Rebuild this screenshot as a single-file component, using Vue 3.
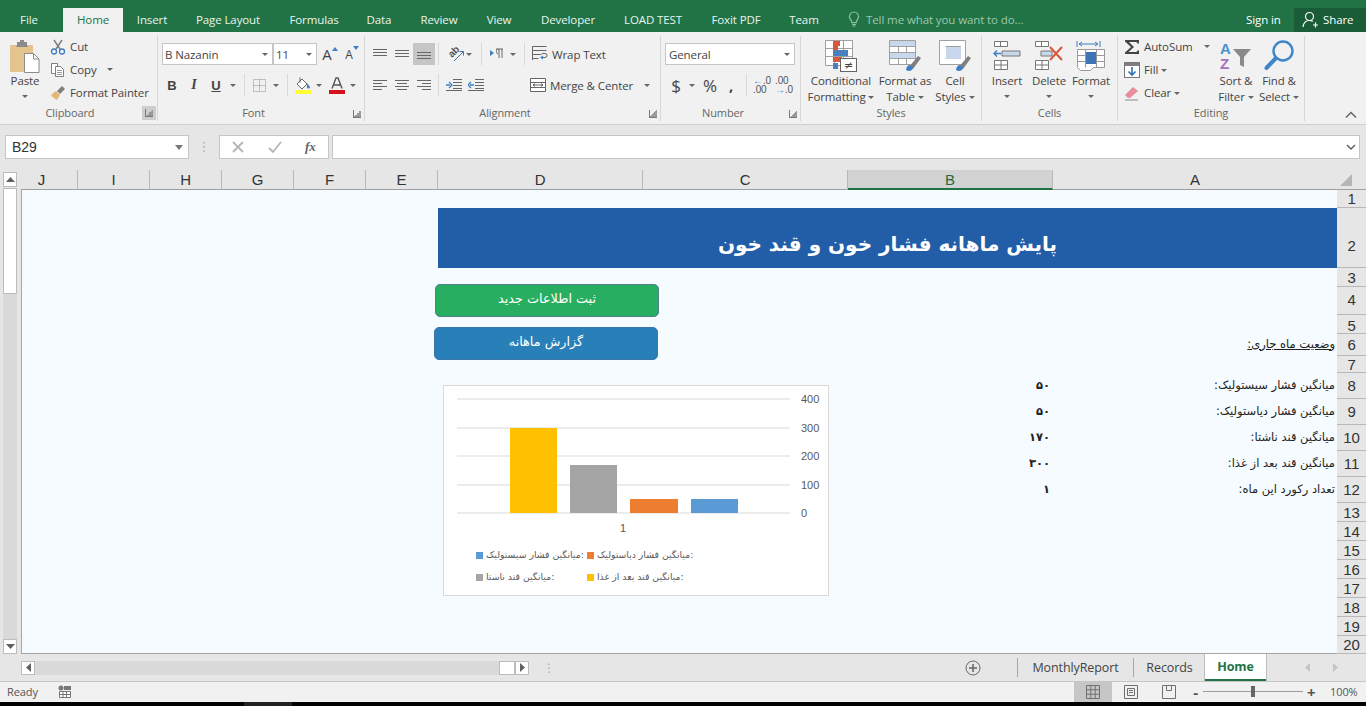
<template>
  <div class="excel">

    <!-- Title / tab strip -->
    <header class="tabstrip">
      <div class="tabs">
        <span v-for="t in tabs" :key="t" class="tab" :class="{ 'tab--active': t === 'Home', 'tab--file': t === 'File' }">{{ t }}</span>
      </div>
      <div class="tell">
        <svg width="12" height="16" viewBox="0 0 12 16" fill="none" stroke="#8fbf9f" stroke-width="1.2"><path d="M6 1a4.6 4.6 0 0 0-4.6 4.6c0 2.2 2 3.2 2.4 6h4.4c.4-2.8 2.4-3.800 2.400-6A4.600 4.600 0 0 0 6 1zM4 13.500h4M4.500 15h3"/></svg>
        <span>Tell me what you want to do...</span>
      </div>
      <span class="signin">Sign in</span>
      <div class="share">
        <svg width="17" height="17" viewBox="0 0 17 17" fill="none" stroke="#fff" stroke-width="1.200"><circle cx="7.500" cy="5.500" r="4"/><path d="M1 16c.5-4 3-6.500 6.500-6.500 1.200 0 2.300.3 3.200.9M11 14h5M13.500 11.500v5"/></svg>
        <span>Share</span>
      </div>
    </header>

    <!-- Ribbon -->
    <section class="ribbon">

      <div class="group">
        <div class="group-body clip-body">
          <div class="big big--paste">
            <svg class="big-icon" width="32" height="34" viewBox="0 0 32 34">
              <rect x="1" y="6" width="23" height="27" fill="#e4c38d"/>
              <path d="M8 6V3h3V1h4v2h3v3l1 2H7z" fill="#8b8b8b"/>
              <path d="M15.500 14.500h9l5.500 5.500v13.500H15.500z" fill="#fff" stroke="#8a8a8a"/>
              <path d="M24.500 14.500V20H30" fill="none" stroke="#8a8a8a"/>
            </svg>
            <span>Paste</span>
            <i class="caret caret--line"></i>
          </div>
          <div class="small-list">
            <div class="small">
              <svg width="16" height="16" viewBox="0 0 16 16" fill="none"><path d="M4 1l6 9M12 1L6 10" stroke="#7b7b7b" stroke-width="1.400"/><circle cx="4" cy="12.500" r="2.500" stroke="#3f7fc1" stroke-width="1.300"/><circle cx="12" cy="12.500" r="2.500" stroke="#3f7fc1" stroke-width="1.300"/></svg>
              <span>Cut</span>
            </div>
            <div class="small">
              <svg width="16" height="16" viewBox="0 0 16 16" fill="#fff" stroke="#808080"><path d="M1.500 1.500h6v10h-6z"/><path d="M5.500 4.500h5l3 3v7h-8z"/><path d="M7 8.500h5M7 10.500h5M7 12.500h5" stroke-width=".8"/></svg>
              <span>Copy</span>
              <i class="caret copy-caret"></i>
            </div>
            <div class="small">
              <svg width="16" height="16" viewBox="0 0 16 16"><path d="M1 10l5-4 4 4-3 5-2-1-1-2-1 1z" fill="#e3b874"/><path d="M7 6l5-5 3 3-5 5z" fill="#7f7f7f"/></svg>
              <span>Format Painter</span>
            </div>
          </div>
        </div>
        <div class="group-label clip-label">Clipboard</div>
        <i class="launcher launcher--hot"></i>
      </div>

      <div class="group">
        <div class="group-body rows font-body">
          <div class="row">
            <div class="combo combo--font"><span>B Nazanin</span><i class="caret"></i></div>
            <div class="combo combo--size"><span>11</span><i class="caret"></i></div>
            <div class="tool grow-a"><span class="a-big">A</span><svg width="6" height="5" viewBox="0 0 6 5"><path d="M0 5l3-4 3 4z" fill="#3f7fc1"/></svg></div>
            <div class="tool"><span class="a-small">A</span><svg width="6" height="5" viewBox="0 0 6 5"><path d="M0 0l3 4 3-4z" fill="#3f7fc1"/></svg></div>
          </div>
          <div class="row">
            <div class="tool tool--b">B</div>
            <div class="tool tool--i">I</div>
            <div class="tool tool--u">U</div>
            <i class="caret caret--slot"></i>
            <i class="sep sep--border"></i>
            <div class="tool">
              <svg width="15" height="15" viewBox="0 0 15 15" fill="none" stroke="#8e8e8e" stroke-dasharray="1 1"><path d="M1.500 1.500h12v12h-12zM1.500 7.500h12M7.500 1.500v12"/></svg>
            </div>
            <i class="caret caret--slot"></i>
            <i class="sep sep--fill"></i>
            <div class="tool">
              <svg width="18" height="18" viewBox="0 0 18 18"><path d="M3 8l5-5 5 5-5 5z" fill="#fff" stroke="#666"/><path d="M6 1.500v5" stroke="#666"/><path d="M13 7l3 4a1.500 1.500 0 0 1-3 0z" fill="#3f7fc1"/><rect x="1" y="14" width="16" height="4" fill="#ffff33"/></svg>
            </div>
            <i class="caret caret--narrow"></i>
            <div class="tool tool--color">
              <svg width="18" height="18" viewBox="0 0 18 18"><path d="M4 12.500L8 2h2l4 10.500M5.500 9h7" fill="none" stroke="#555" stroke-width="1.400"/><rect x="1" y="14" width="16" height="4" fill="#d5121b"/></svg>
            </div>
            <i class="caret caret--narrow"></i>
          </div>
        </div>
        <div class="group-label group-label--launch">Font</div>
        <i class="launcher"></i>
      </div>

      <div class="group">
        <div class="group-body rows align-body">
          <div class="row">
            <div class="tool"><svg width="14" height="10" viewBox="0 0 14 10" stroke="#666"><path d="M0 .5h14M0 3.500h14M0 6.500h14"/></svg></div>
            <div class="tool"><svg width="14" height="10" viewBox="0 0 14 10" stroke="#666"><path d="M0 1.500h14M0 4.500h14M0 7.500h14"/></svg></div>
            <div class="tool tool--on"><svg width="14" height="10" viewBox="0 0 14 10" stroke="#666"><path d="M0 3.500h14M0 6.500h14M0 9.500h14"/></svg></div>
            <i class="sep sep--4"></i>
            <div class="tool tool--orient">
              <svg width="18" height="16" viewBox="0 0 18 16" fill="none" stroke="#666"><text x="0" y="0" transform="translate(4 12) rotate(-45)" class="orient-ab">ab</text><path d="M6 15l9-9M11.500 5.500H15.500V9.500" stroke="#4a6fa0"/></svg>
            </div>
            <i class="caret caret--orient"></i>
            <i class="sep sep--para"></i>
            <div class="tool"><svg width="14" height="12" viewBox="0 0 14 12"><path d="M0 2l4 3-4 3z" fill="#3f7fc1"/><path d="M6 1h7M8 1c-2 0-2 5 0 5M9 1v9M12 1v9" fill="none" stroke="#666"/></svg></div>
            <i class="caret caret--para"></i>
            <i class="sep sep--wrap"></i>
            <div class="wide">
              <svg width="18" height="18" viewBox="0 0 18 18" fill="none" stroke="#666"><path d="M1.500 1.500h14M1.500 5.500h14M1.500 9.500h9M1.500 13.500h6M1.500 1v14M11 12.500h3a2 2 0 0 0 0-4h-3"/><path d="M9 12.500l3-2v4z" fill="#3f7fc1" stroke="none"/></svg>
              <span>Wrap Text</span>
            </div>
          </div>
          <div class="row">
            <div class="tool"><svg width="14" height="11" viewBox="0 0 14 11" stroke="#666"><path d="M0 .5h14M0 3.500h9M0 6.500h14M0 9.500h9"/></svg></div>
            <div class="tool"><svg width="14" height="11" viewBox="0 0 14 11" stroke="#666"><path d="M0 .5h14M2 3.500h10M0 6.500h14M2 9.500h10"/></svg></div>
            <div class="tool"><svg width="14" height="11" viewBox="0 0 14 11" stroke="#666"><path d="M0 .5h14M5 3.500h9M0 6.500h14M5 9.500h9"/></svg></div>
            <i class="sep sep--4"></i>
            <div class="tool tool--indent"><svg width="16" height="12" viewBox="0 0 16 12"><path d="M0 6h4M3 3l3 3-3 3" fill="none" stroke="#3f7fc1" stroke-width="1.300"/><path d="M7 .5h9M7 3.500h9M7 6.500h9M7 9.500h9M0 11.500h16" stroke="#666"/></svg></div>
            <div class="tool"><svg width="16" height="12" viewBox="0 0 16 12"><path d="M6 6H2M3 3L0 6l3 3" fill="none" stroke="#3f7fc1" stroke-width="1.300"/><path d="M7 .5h9M7 3.500h9M7 6.500h9M7 9.500h9M0 11.500h16" stroke="#666"/></svg></div>
            <div class="wide wide--merge">
              <svg width="18" height="16" viewBox="0 0 18 16" fill="#fff" stroke="#666"><path d="M1.500 1.500h15v13h-15zM1.500 5.500h15M1.500 10.500h15" /><path d="M4 8h10M4 8l2-1.500M4 8l2 1.500M14 8l-2-1.500M14 8l-2 1.500" fill="none" stroke="#444" stroke-width=".8"/></svg>
              <span>Merge &amp; Center</span>
              <i class="caret merge-caret"></i>
            </div>
          </div>
        </div>
        <div class="group-label group-label--launch">Alignment</div>
        <i class="launcher"></i>
      </div>

      <div class="group">
        <div class="group-body rows number-body">
          <div class="row">
            <div class="combo combo--format"><span>General</span><i class="caret"></i></div>
          </div>
          <div class="row">
            <div class="tool tool--dollar">$</div>
            <i class="caret caret--narrow"></i>
            <div class="tool tool--pct">%</div>
            <div class="tool tool--comma">,</div>
            <i class="sep sep--comma"></i>
            <div class="tool tool--dec"><span class="dec"><em>←</em>.0<br>.00</span></div>
            <div class="tool tool--dec"><span class="dec">.00<br><em>→</em>.0</span></div>
          </div>
        </div>
        <div class="group-label group-label--launch">Number</div>
        <i class="launcher"></i>
      </div>

      <div class="group">
        <div class="group-body big-row styles-body">
          <div class="big big--cond">
            <svg class="big-icon" width="32" height="32" viewBox="0 0 32 32">
              <path d="M.5.500h27v25H.5zM9.500.5v25M18.500.5v25M.5 8.500h27M.5 16.500h27" fill="#fff" stroke="#a0a0a0"/>
              <rect x="8" y="1" width="7" height="5" fill="#d9573a"/><rect x="8" y="6" width="5" height="5" fill="#d9573a"/>
              <rect x="8" y="10" width="15" height="6" fill="#4a80c0"/><rect x="8" y="17" width="9" height="5" fill="#d9573a"/><rect x="8" y="23" width="5" height="6" fill="#4a80c0"/>
              <rect x="15.500" y="18.500" width="16" height="13" fill="#fff" stroke="#666"/>
              <text x="23.500" y="29" text-anchor="middle" class="neq">≠</text>
            </svg>
            <span>Conditional</span>
            <span>Formatting <i class="caret caret--inline"></i></span>
          </div>
          <div class="big big--table">
            <svg class="big-icon" width="32" height="32" viewBox="0 0 32 32">
              <path d="M.5.500h26v24H.5zM9.500.5v24M17.500.5v24M.5 6.500h26M.5 12.500h26M.5 18.500h26" fill="#fff" stroke="#a0a0a0"/>
              <rect x="1" y="1" width="25" height="5" fill="#c9d7ec"/><rect x="1" y="13" width="25" height="5" fill="#c9d7ec"/>
              <path d="M20 27l9-11 3 2-8 11z" fill="#7f7f7f"/><path d="M17 30c0-3 2-5 4-5l3 3c-1 3-4 4-7 2z" fill="#3f7fc1"/>
            </svg>
            <span>Format as</span>
            <span>Table <i class="caret caret--inline"></i></span>
          </div>
          <div class="big big--cellst">
            <svg class="big-icon" width="32" height="32" viewBox="0 0 32 32">
              <path d="M.5.500h26v24H.5zM6.500 6.500h15v12h-15" fill="#fff" stroke="#a0a0a0"/>
              <rect x="7" y="7" width="15" height="12" fill="#c9d7ec"/>
              <path d="M20 27l9-11 3 2-8 11z" fill="#7f7f7f"/><path d="M17 30c0-3 2-5 4-5l3 3c-1 3-4 4-7 2z" fill="#3f7fc1"/>
            </svg>
            <span>Cell</span>
            <span>Styles <i class="caret caret--inline"></i></span>
          </div>
        </div>
        <div class="group-label">Styles</div>
      </div>

      <div class="group">
        <div class="group-body big-row cells-body">
          <div class="big big--insert">
            <svg class="big-icon" width="28" height="30" viewBox="0 0 28 30">
              <path d="M1.500.5h13v5h-13zM7.500.5v5M1.500 19.500h13v9h-13zM1.500 24h13M8 19.500v9" fill="#fff" stroke="#777"/>
              <path d="M9 10h18v5H9z" fill="#c9d7ec" stroke="#777"/><path d="M1 12.500h7M4 9.500l-3 3 3 3" fill="none" stroke="#3f7fc1" stroke-width="1.400"/>
            </svg>
            <span>Insert</span>
            <i class="caret caret--line"></i>
          </div>
          <div class="big big--delete">
            <svg class="big-icon" width="30" height="30" viewBox="0 0 30 30">
              <path d="M1.500.5h13v5h-13zM7.500.5v5M1.500 19.500h13v9h-13zM1.500 24h13M8 19.500v9" fill="#fff" stroke="#777"/>
              <path d="M7 10h11v5H7z" fill="#c9d7ec" stroke="#777"/>
              <path d="M16 6l12 13M28 6L16 19" stroke="#d9573a" stroke-width="2"/>
            </svg>
            <span>Delete</span>
            <i class="caret caret--line"></i>
          </div>
          <div class="big big--format">
            <svg class="big-icon" width="30" height="32" viewBox="0 0 30 32">
              <path d="M1 1v6M24 1v6M3 4h19M3 4l3-2M3 4l3 2M22 4l-3-2M22 4l-3 2" fill="none" stroke="#3f7fc1"/>
              <path d="M1.500 9.500h27v18h-11l-3 3h-10l-3-3zM9.500 9.500v18M20.500 9.500v18M1.500 15.500h27M1.500 21.500h27" fill="#fff" stroke="#999"/>
              <rect x="10" y="12" width="10" height="12" fill="#3f74b5"/>
            </svg>
            <span>Format</span>
            <i class="caret caret--line"></i>
          </div>
        </div>
        <div class="group-label">Cells</div>
      </div>

      <div class="group">
        <div class="group-body editing-body">
          <div class="small-list edit-list">
            <div class="small">
              <svg width="16" height="16" viewBox="0 0 16 16"><path d="M1 1h14v3.500h-1.500L12.500 3H5l5 5-5.500 5h8l1-1.500H15V15H1v-1.500L7 8 1 2.500z" fill="#444"/></svg>
              <span>AutoSum</span>
              <i class="caret sum-caret"></i>
            </div>
            <div class="small">
              <svg width="16" height="16" viewBox="0 0 16 16"><rect x=".5" y=".5" width="15" height="15" fill="#fff" stroke="#777"/><rect x="1" y="1" width="14" height="3" fill="#7f7f7f"/><path d="M8 5v8M4.500 9.500L8 13l3.500-3.500" fill="none" stroke="#2a70b8" stroke-width="1.600"/></svg>
              <span>Fill <i class="caret caret--inline"></i></span>
            </div>
            <div class="small">
              <svg width="16" height="16" viewBox="0 0 16 16"><path d="M1 10l8-8 5 4-8 7H4z" fill="#e88d9c"/><path d="M1 15h13" stroke="#888"/></svg>
              <span>Clear <i class="caret caret--inline"></i></span>
            </div>
          </div>
          <div class="big big--sort">
            <svg class="big-icon" width="34" height="30" viewBox="0 0 34 30">
              <text x="1" y="13" class="az az--a">A</text>
              <text x="1" y="28" class="az az--z">Z</text>
              <path d="M14 8h18l-7 8v10l-4-2v-8z" fill="#8a8a8a"/>
            </svg>
            <span>Sort &amp;</span>
            <span>Filter <i class="caret caret--inline"></i></span>
          </div>
          <div class="big big--find">
            <svg class="big-icon" width="30" height="32" viewBox="0 0 30 32" fill="none" stroke="#3f86c8"><circle cx="19" cy="11" r="9.500" stroke-width="2.400"/><path d="M11.500 18.500L2.500 28" stroke-width="4" stroke-linecap="round"/></svg>
            <span>Find &amp;</span>
            <span>Select <i class="caret caret--inline"></i></span>
          </div>
        </div>
        <div class="group-label">Editing</div>
      </div>

      <div class="collapse">
        <svg width="12" height="8" viewBox="0 0 12 8" fill="none" stroke="#666" stroke-width="1.500"><path d="M1 6.500l5-5 5 5"/></svg>
      </div>
    </section>

    <!-- Formula bar -->
    <section class="formula">
      <div class="namebox"><span>B29</span><i class="caret caret--big"></i></div>
      <span class="grip">⋮</span>
      <div class="fx-box">
        <svg width="14" height="14" viewBox="0 0 14 14" stroke="#b5b5b5" stroke-width="1.800"><path d="M2 2l10 10M12 2L2 12"/></svg>
        <svg width="14" height="14" viewBox="0 0 14 14" fill="none" stroke="#b5b5b5" stroke-width="1.800"><path d="M1 8l4 4 8-10"/></svg>
        <span class="fx">fx</span>
      </div>
      <div class="formula-input">
        <svg width="10" height="6" viewBox="0 0 10 6" fill="none" stroke="#555" stroke-width="1.300"><path d="M1 1l4 4 4-4"/></svg>
      </div>
    </section>

    <!-- Worksheet, right to left: A is the first column -->
    <section class="sheet">
      <div class="sheet-head">
        <div class="col-heads">
          <div v-for="c in columns" :key="c" class="col-head" :class="{ 'col-head--sel': c === 'B', 'col-head--j': c === 'J' }">{{ c }}</div>
        </div>
        <div class="corner"><svg width="12" height="12" viewBox="0 0 12 12"><path d="M0 0l12 12H0z" fill="#b5b5b5"/></svg></div>
      </div>
      <div class="sheet-body">
        <div class="vscroll">
          <div class="sb-btn"><svg width="9" height="5" viewBox="0 0 9 5"><path d="M0 5l4.500-5L9 5z" fill="#606060"/></svg></div>
          <div class="sb-thumb"></div>
          <div class="sb-track"></div>
          <div class="sb-btn"><svg width="9" height="5" viewBox="0 0 9 5"><path d="M0 0l4.500 5L9 0z" fill="#606060"/></svg></div>
        </div>

        <div class="canvas">
          <div class="banner">پایش ماهانه فشار خون و قند خون</div>
          <div class="cell cell--label cell--status">وضعیت ماه جاری:</div>
          <template v-for="r in records" :key="r.row">
            <div class="cell cell--label" :style="{ gridRow: r.row }">{{ r.label }}</div>
            <div class="cell cell--value" :style="{ gridRow: r.row }">{{ r.value }}</div>
          </template>

          <!-- Floating shapes over the cells -->
          <div class="shape shape--green">ثبت اطلاعات جدید</div>
          <div class="shape shape--blue">گزارش ماهانه</div>

          <div class="chart">
            <svg width="384" height="209" viewBox="0 0 384 209">
              <g v-for="g in gridlines" :key="g.label">
                <line x1="13" x2="346" :y1="g.y" :y2="g.y" stroke="#d9d9d9" />
                <text x="357" :y="g.y + 3.500" class="chart-num">{{ g.label }}</text>
              </g>
              <rect v-for="b in bars" :key="b.color" :x="b.x" :y="b.y" :width="b.w" :height="127 - b.y" :fill="b.color" />
              <text x="179" y="146" class="chart-num" text-anchor="middle">1</text>
              <g v-for="l in legend" :key="l.color">
                <rect :x="l.x" :y="l.y" width="7" height="7" :fill="l.color" />
                <text :x="l.x + 10" :y="l.y + 5.500" class="chart-legend">{{ l.text }}</text>
              </g>
            </svg>
          </div>
        </div>

        <div class="row-heads">
          <div v-for="n in 20" :key="n" class="row-head" :class="'row-head--' + n">{{ n }}</div>
        </div>
      </div>
    </section>

    <!-- Sheet tabs -->
    <section class="sheetbar">
      <div class="hscroll">
        <div class="hs-btn"><svg width="5" height="9" viewBox="0 0 5 9"><path d="M5 0L0 4.500 5 9z" fill="#606060"/></svg></div>
        <div class="hs-track"></div>
        <div class="hs-thumb"></div>
        <div class="hs-btn"><svg width="5" height="9" viewBox="0 0 5 9"><path d="M0 0l5 4.500L0 9z" fill="#606060"/></svg></div>
      </div>
      <span class="hs-grip">⋮</span>
      <svg class="add-sheet" width="16" height="16" viewBox="0 0 16 16" fill="none" stroke="#666"><circle cx="8" cy="8" r="7"/><path d="M4 8h8M8 4v8" stroke-width="1.500"/></svg>
      <div class="sheet-tabs">
        <span class="sheet-tab sheet-tab--monthly">MonthlyReport</span>
        <span class="sheet-tab sheet-tab--records">Records</span>
        <span class="sheet-tab sheet-tab--active">Home</span>
      </div>
      <div class="tab-arrows">
        <svg width="5" height="9" viewBox="0 0 5 9"><path d="M5 0L0 4.500 5 9z" fill="#c4c4c4"/></svg>
        <svg width="5" height="9" viewBox="0 0 5 9"><path d="M0 0l5 4.500L0 9z" fill="#c4c4c4"/></svg>
      </div>
    </section>

    <!-- Status bar -->
    <footer class="status">
      <span class="ready">Ready</span>
      <svg class="macro" width="13" height="13" viewBox="0 0 13 13"><circle cx="3" cy="3" r="2.500" fill="#777"/><path d="M6 1h7v4H6z" fill="#777"/><path d="M1.500 6.500h11v6h-11zM1.500 9.500h11M5 6.500v6M8.500 6.500v6" fill="#fff" stroke="#777"/></svg>
      <div class="views">
        <div class="view view--on"><svg width="14" height="14" viewBox="0 0 14 14" fill="none" stroke="#707070"><path d="M.5.500h13v13H.5zM.5 4.800h13M.5 9.200h13M4.800.5v13M9.200.5v13"/></svg></div>
        <div class="view"><svg width="14" height="14" viewBox="0 0 14 14" fill="none" stroke="#707070"><path d="M.5.500h13v13H.5zM3.500 3.500h7v7h-7zM5 5.500h4M5 7.500h4"/></svg></div>
        <div class="view"><svg width="14" height="14" viewBox="0 0 14 14" fill="none" stroke="#707070"><path d="M.5.500h13v13H.5zM4.500.5v5h5v-5"/></svg></div>
      </div>
      <div class="zoom">
        <span class="zoom-sign">-</span>
        <div class="zoom-track"><i class="zoom-thumb"></i></div>
        <span class="zoom-sign">+</span>
      </div>
      <span class="zoom-pct">100%</span>
    </footer>
    <div class="taskbar"><i class="taskbar-item"></i></div>
  </div>
</template>

<script setup>
const tabs = ['File', 'Home', 'Insert', 'Page Layout', 'Formulas', 'Data', 'Review', 'View', 'Developer', 'LOAD TEST', 'Foxit PDF', 'Team']
const columns = ['A', 'B', 'C', 'D', 'E', 'F', 'G', 'H', 'I', 'J']

const records = [
  { row: 8, label: 'میانگین فشار سیستولیک:', value: '۵۰' },
  { row: 9, label: 'میانگین فشار دیاستولیک:', value: '۵۰' },
  { row: 10, label: 'میانگین قند ناشتا:', value: '۱۷۰' },
  { row: 11, label: 'میانگین قند بعد از غذا:', value: '۳۰۰' },
  { row: 12, label: 'تعداد رکورد این ماه:', value: '۱' },
]

const gridlines = [
  { y: 13, label: '400' },
  { y: 42, label: '300' },
  { y: 70, label: '200' },
  { y: 99, label: '100' },
  { y: 127, label: '0' },
]

const bars = [
  { x: 66, y: 42, w: 47, color: '#ffc000' },
  { x: 126, y: 79, w: 47, color: '#a5a5a5' },
  { x: 186, y: 113, w: 48, color: '#ed7d31' },
  { x: 247, y: 113, w: 47, color: '#5b9bd5' },
]

const legend = [
  { x: 32, y: 166, color: '#5b9bd5', text: 'میانگین فشار سیستولیک:' },
  { x: 143, y: 166, color: '#ed7d31', text: 'میانگین فشار دیاستولیک:' },
  { x: 32, y: 188, color: '#a5a5a5', text: 'میانگین قند ناشتا:' },
  { x: 143, y: 188, color: '#ffc000', text: 'میانگین قند بعد از غذا:' },
]
</script>

<style>
html, body { margin: 0; height: 100%; overflow: hidden; }
</style>

<style scoped>
.excel {
  width: 1366px;
  height: 706px;
  display: flex;
  flex-direction: column;
  overflow: hidden;
  font-family: "Open Sans", "DejaVu Sans", sans-serif;
  font-size: 11.5px;
  letter-spacing: -0.1px;
  color: #444;
  background: #e6e6e6;
}
i { display: block; font-style: normal; }

/* ── Tab strip ─────────────────────────────────────────────── */
.tabstrip {
  height: 32px;
  flex: none;
  display: flex;
  background: #217346;
  color: #fff;
}
.tabs {
  display: grid;
  grid-template-columns: 63px 60px 58px 94px 78px 52px 68px 52px 86px 84px 82px 54px;
  padding-top: 8px;
}
.tab {
  display: flex;
  align-items: center;
  justify-content: center;
  color: #eaf3ee;
  padding-bottom: 2px;
}
.tab--file { padding-right: 5px; }
.tab--active { background: #f1f1f1; color: #217346; }
.tell {
  margin-left: 17px;
  padding: 8px 0 2px;
  display: flex;
  align-items: center;
  gap: 6px;
  width: 398px;
  color: #9cc7ac;
}
.signin {
  padding: 8px 0 2px;
  margin-right: 11px;
  width: 37px;
  white-space: nowrap;
  display: flex;
  align-items: center;
}
.share {
  margin-top: 8px;
  flex: 1;
  background: #1a5c38;
  display: flex;
  align-items: center;
  padding: 0 0 2px 8px;
  gap: 4px;
}

/* ── Ribbon ────────────────────────────────────────────────── */
.ribbon {
  height: 93px;
  flex: none;
  background: #f1f1f1;
  border-bottom: 1px solid #cfcfcf;
  box-sizing: border-box;
  display: grid;
  grid-template-columns: 158px 207px 296px 140px 181px 136px 187px 1fr;
}
.group {
  position: relative;
  display: flex;
  flex-direction: column;
  box-sizing: border-box;
  padding-top: 3px;
  margin-top: 4px;
  margin-bottom: 3px;
  border-right: 1px solid #d6d6d6;
}
.group-body { flex: 1; min-height: 0; margin-top: -4px; padding-top: 4px; }
.group-label {
  height: 16px;
  line-height: 16px;
  text-align: center;
  color: #666;
  font-size: 11px;
}
.clip-label { padding-right: 17px; }
.group-label--launch { padding-right: 15px; }
.launcher {
  position: absolute;
  right: 3px;
  bottom: 3px;
  width: 7px;
  height: 7px;
  border-left: 1px solid #777;
  border-bottom: 1px solid #777;
  background: linear-gradient(135deg, transparent 50%, #999 50%);
}
.launcher--hot {
  outline: 3px solid #cdcdcd;
  background-color: #cdcdcd;
  right: 4px;
  bottom: 4px;
}

.caret {
  width: 0;
  height: 0;
  border-left: 3px solid transparent;
  border-right: 3px solid transparent;
  border-top: 3px solid #666;
}
.caret--slot { margin: 0 3px; }
.caret--narrow { margin: 0 2px; }
.caret--orient { margin-left: -2px; }
.caret--para { margin-left: 2px; }
.caret--inline { display: inline-block; vertical-align: middle; }
.caret--big { border-left-width: 4px; border-right-width: 4px; border-top-width: 5px; border-top-color: #777; }

.small-list { display: flex; flex-direction: column; margin-top: -4px; }
.small { height: 23px; display: flex; align-items: center; gap: 2px; white-space: nowrap; }
.small > span { margin-left: 2px; }
.small > svg { flex: none; }

.big { display: flex; flex-direction: column; align-items: center; line-height: 16px; white-space: nowrap; }
.big-icon { height: 34px; margin-bottom: 0; flex: none; }
.big > span { display: block; }
.caret--line { margin-top: 6px; }

/* Clipboard */
.clip-body { display: flex; padding-left: 0; }
.big--paste { width: 50px; }
.copy-caret { margin-left: 8px; }

/* Rows of small tools (Font, Alignment, Number) */
.rows { display: flex; flex-direction: column; gap: 9px; padding-top: 8px; }
.row { display: flex; align-items: center; height: 22px; }
.tool {
  width: 22px;
  height: 22px;
  flex: none;
  display: flex;
  align-items: center;
  justify-content: center;
}
.tool--on { background: #c6c6c6; }
.sep { width: 1px; height: 22px; background: #d9d9d9; margin: 0 5px; flex: none; }
.sep--border { margin: 0 3px 0 5px; }
.sep--fill { margin: 0 4px 0 5px; }
.combo {
  height: 22px;
  box-sizing: border-box;
  background: #fff;
  border: 1px solid #c6c6c6;
  display: flex;
  align-items: center;
  justify-content: space-between;
  padding: 0 4px 0 2px;
}
.combo--font { width: 111px; }
.combo--size { width: 44px; margin-left: 0; }
.combo--format { width: 130px; padding-left: 3px; }
.font-body { padding-left: 4px; }
.grow-a { margin-left: 2px; }
.a-big { font-size: 15px; }
.a-small { font-size: 12px; }
.tool .a-big + svg, .tool .a-small + svg { align-self: flex-start; margin-top: 3px; }
.tool--b { font-weight: 700; font-family: "Liberation Sans", sans-serif; font-size: 13px; margin-left: -1px; }
.tool--i { font-style: italic; font-family: "Liberation Serif", serif; font-size: 14px; font-weight: 700; }
.tool--u { text-decoration: underline; font-weight: 700; font-family: "Liberation Sans", sans-serif; font-size: 13px; }
.tool--color { margin-left: 2px; }

/* Alignment */
.align-body { padding-left: 4px; }
.sep--4 { margin: 0 4px 0 3px; }
.tool--orient { margin-left: 3px; }
.orient-ab { font: 700 10px "Liberation Sans", sans-serif; fill: #555; stroke: none; }
.sep--para { margin: 0 4px 0 9px; }
.sep--wrap { margin: 0 6px 0 8px; }
.wide { display: flex; align-items: center; gap: 3px; white-space: nowrap; }
.wide--merge { margin-left: 42px; }
.merge-caret { margin-left: 8px; }

/* Number */
.number-body { padding-left: 4px; }
.tool--dollar { font-size: 17px; }
.tool--pct { font-size: 17px; margin-left: 2px; }
.tool--comma { font-size: 15px; font-weight: 700; width: 20px; }
.sep--comma { margin: 0 4px 0 5px; }
.dec { font-size: 10px; line-height: 9px; color: #555; font-family: "Liberation Sans", sans-serif; }
.dec em { color: #3f7fc1; font-style: normal; }

/* Large-button groups */
.big-row { display: flex; }
.styles-body { padding-left: 5px; }
.big--cond { width: 70px; }
.big--table { width: 58px; }
.big--cellst { width: 42px; }
.neq { font: 11px "DejaVu Sans", sans-serif; fill: #444; }
.cells-body { padding-left: 4px; }
.big--insert { width: 42px; }
.big--delete { width: 42px; }
.big--format { width: 42px; }

/* Editing */
.editing-body { display: flex; padding-left: 6px; }
.edit-list { width: 90px; flex: none; }
.sum-caret { margin-left: 9px; }
.big--sort { width: 44px; }
.big--find { width: 42px; }
.az { font: 700 15px "Liberation Sans", sans-serif; }
.az--a { fill: #4a90d0; }
.az--z { fill: #a46fc0; }

.collapse { display: flex; justify-content: flex-end; align-items: flex-end; padding: 0 9px 5px 0; }

/* ── Formula bar ───────────────────────────────────────────── */
.formula {
  height: 45px;
  flex: none;
  box-sizing: border-box;
  padding: 10px 6px 11px 5px;
  display: flex;
  align-items: stretch;
  background: #e6e6e6;
}
.namebox, .fx-box, .formula-input {
  background: #fff;
  border: 1px solid #c6c6c6;
  box-sizing: border-box;
  display: flex;
  align-items: center;
}
.namebox {
  width: 184px;
  justify-content: space-between;
  padding: 0 5px 0 6px;
  font: 14px "Liberation Sans", sans-serif;
  color: #333;
}
.grip { width: 30px; text-align: center; color: #aaa; font-size: 13px; line-height: 22px; }
.fx-box { width: 110px; padding-left: 11px; gap: 23px; margin-right: 3px; }
.fx { font: italic 700 13px "Liberation Serif", serif; color: #666; }
.formula-input { flex: 1; justify-content: flex-end; padding-right: 3px; }

/* ── Worksheet ─────────────────────────────────────────────── */
.sheet { height: 484px; flex: none; display: flex; flex-direction: column; }
.sheet-head { height: 20px; flex: none; display: flex; padding-left: 21px; }
.col-heads {
  direction: rtl;
  display: grid;
  grid-template-columns: 284px 205px 205px 205px 72px 72px 72px 72px 72px 57px;
  width: 1316px;
  border-bottom: 1px solid #9f9f9f;
  box-sizing: border-box;
}
.col-head {
  text-align: center;
  font: 15px/20px "Liberation Sans", sans-serif;
  color: #333;
  border-right: 1px solid #b8b8b8;
  box-sizing: border-box;
}
.col-head:first-child { border-right: none; }
.col-head--j { padding-right: 15px; }
.col-head--sel { background: #d2d2d2; color: #1f6b40; border-bottom: 2px solid #217346; height: 20px; }
.corner { flex: 1; display: flex; align-items: center; padding-left: 3px; border-bottom: 1px solid #9f9f9f; }
.corner svg { transform: scaleX(-1); }

.sheet-body { flex: 1; min-height: 0; display: flex; }
.vscroll { width: 21px; flex: none; box-sizing: border-box; padding: 0 4px 0 3px; display: flex; flex-direction: column; margin-top: -18px; }
.sb-btn {
  height: 15px;
  flex: none;
  background: #fff;
  border: 1px solid #bcbcbc;
  box-sizing: border-box;
  display: flex;
  align-items: center;
  justify-content: center;
}
.sb-thumb { height: 106px; flex: none; background: #fff; border: 1px solid #bcbcbc; box-sizing: border-box; margin-top: 1px; }
.sb-track { flex: 1; background: #d9d9d9; }

.canvas {
  position: relative;
  direction: rtl;
  width: 1316px;
  flex: none;
  box-sizing: border-box;
  display: grid;
  grid-template-columns: 284px 205px 205px 205px 72px 72px 72px 72px 72px 57px;
  grid-template-rows: 18px 60px 19px 28px 19px 22px 17px 26px 26px 26px 26px 26px repeat(7, 19px) 18px;
  background: #f5fbff;
  box-shadow: inset 1px 0 0 #a6a6a6, inset 0 -1px 0 #a6a6a6;
  font-family: "DejaVu Sans", sans-serif;
  letter-spacing: 0;
  color: #222;
}
.banner {
  grid-row: 2;
  grid-column: 1 / span 4;
  background: #225ea8;
  color: #fff;
  font: 700 20px "DejaVu Sans", sans-serif;
  text-align: center;
  line-height: 72px;
  height: 60px;
  overflow: hidden;
}
.cell {
  display: flex;
  align-items: center;
  font-size: 11.500px;
  white-space: nowrap;
  overflow: visible;
  padding-bottom: 3px;
  box-sizing: border-box;
}
.cell--label { grid-column: 1; padding-right: 2px; }
.cell--status { grid-row: 6; text-decoration: underline; }
.cell--value { grid-column: 2; padding-right: 3px; font-weight: 700; font-size: 11.500px; }

.shape {
  position: absolute;
  width: 224px;
  height: 33px;
  box-sizing: border-box;
  border-radius: 5px;
  color: #fff;
  font: 12.800px/28px "DejaVu Sans", sans-serif;
  text-align: center;
  border: 1px solid #4f7f8f;
}
.shape--green { left: 414px; top: 94px; background: #27ae60; }
.shape--blue { left: 413px; top: 137px; background: #2980b9; border-color: #3a76a8; }

.chart {
  position: absolute;
  left: 422px;
  top: 195px;
  direction: ltr;
  background: #fff;
  border: 1px solid #d9d9d9;
  line-height: 0;
}
.chart-num { font: 11px "Liberation Sans", sans-serif; fill: #595959; }
.chart-legend { font: 9.300px "DejaVu Sans", sans-serif; fill: #595959; }

.row-heads {
  flex: 1;
  display: grid;
  grid-template-rows: 18px 60px 19px 28px 19px 22px 17px 26px 26px 26px 26px 26px repeat(7, 19px) 18px;
}
.row-head {
  border-bottom: 1px solid #b8b8b8;
  box-sizing: border-box;
  background: #e6e6e6;
  display: flex;
  align-items: center;
  justify-content: center;
  font: 15px "Liberation Sans", sans-serif;
  color: #333;
}
.row-head--2 { padding-top: 15px; }
.row-head--4 { padding-bottom: 3px; }
.row-head--5 { padding-top: 2px; }

/* ── Sheet tabs ────────────────────────────────────────────── */
.sheetbar { height: 27px; flex: none; display: flex; align-items: center; padding-left: 21px; box-sizing: border-box; background: #e6e6e6; }
.hscroll { width: 508px; height: 14px; display: flex; flex: none; }
.hs-btn {
  width: 14px;
  background: #fff;
  border: 1px solid #bcbcbc;
  box-sizing: border-box;
  display: flex;
  align-items: center;
  justify-content: center;
  flex: none;
}
.hs-track { flex: 1; background: #d9d9d9; }
.hs-thumb { width: 16px; background: #fff; border: 1px solid #bcbcbc; box-sizing: border-box; }
.hs-grip { margin-left: 14px; color: #aaa; width: 8px; font-size: 12px; }
.add-sheet { margin-left: 414px; flex: none; }
.sheet-tabs { display: flex; height: 27px; margin-left: 36px; align-items: stretch; font-size: 12.500px; }
.sheet-tab { display: flex; align-items: center; justify-content: center; box-sizing: border-box; color: #444; }
.sheet-tab--monthly { width: 116px; border-left: 1px solid #a6a6a6; margin: 4px 0; }
.sheet-tab--records { width: 72px; border-left: 1px solid #a6a6a6; margin: 4px 0; }
.sheet-tab--active {
  width: 61px;
  background: #fff;
  color: #217346;
  font-weight: 700;
  border-bottom: 2px solid #217346;
  box-shadow: 1px 0 0 #bdbdbd, -1px 0 0 #bdbdbd;
}
.tab-arrows { margin-left: 39px; display: flex; gap: 23px; }

/* ── Status bar ────────────────────────────────────────────── */
.status {
  height: 21px;
  flex: none;
  display: flex;
  align-items: center;
  background: #f1f1f1;
  box-shadow: inset 0 1px 0 #c6c6c6;
  padding-left: 7px;
  font-size: 11px;
  color: #555;
}
.ready { width: 51px; }
.macro { flex: none; }
.views { margin-left: 1003px; display: flex; height: 21px; }
.view { width: 38px; display: flex; align-items: center; justify-content: center; }
.view--on { background: #c6c6c6; }
.zoom { margin-left: 4px; display: flex; align-items: center; gap: 4px; width: 122px; }
.zoom-sign { font-size: 15px; font-weight: 700; line-height: 14px; width: 7px; text-align: center; }
.zoom-track { flex: 1; height: 1px; background: #9c9c9c; position: relative; }
.zoom-thumb { position: absolute; left: 48px; top: -5px; width: 4px; height: 11px; background: #666; }
.zoom-pct { margin-left: 16px; }
.taskbar { flex: 1; background: #000; padding-left: 244px; }
.taskbar-item { width: 48px; height: 100%; background: #222; }
</style>
